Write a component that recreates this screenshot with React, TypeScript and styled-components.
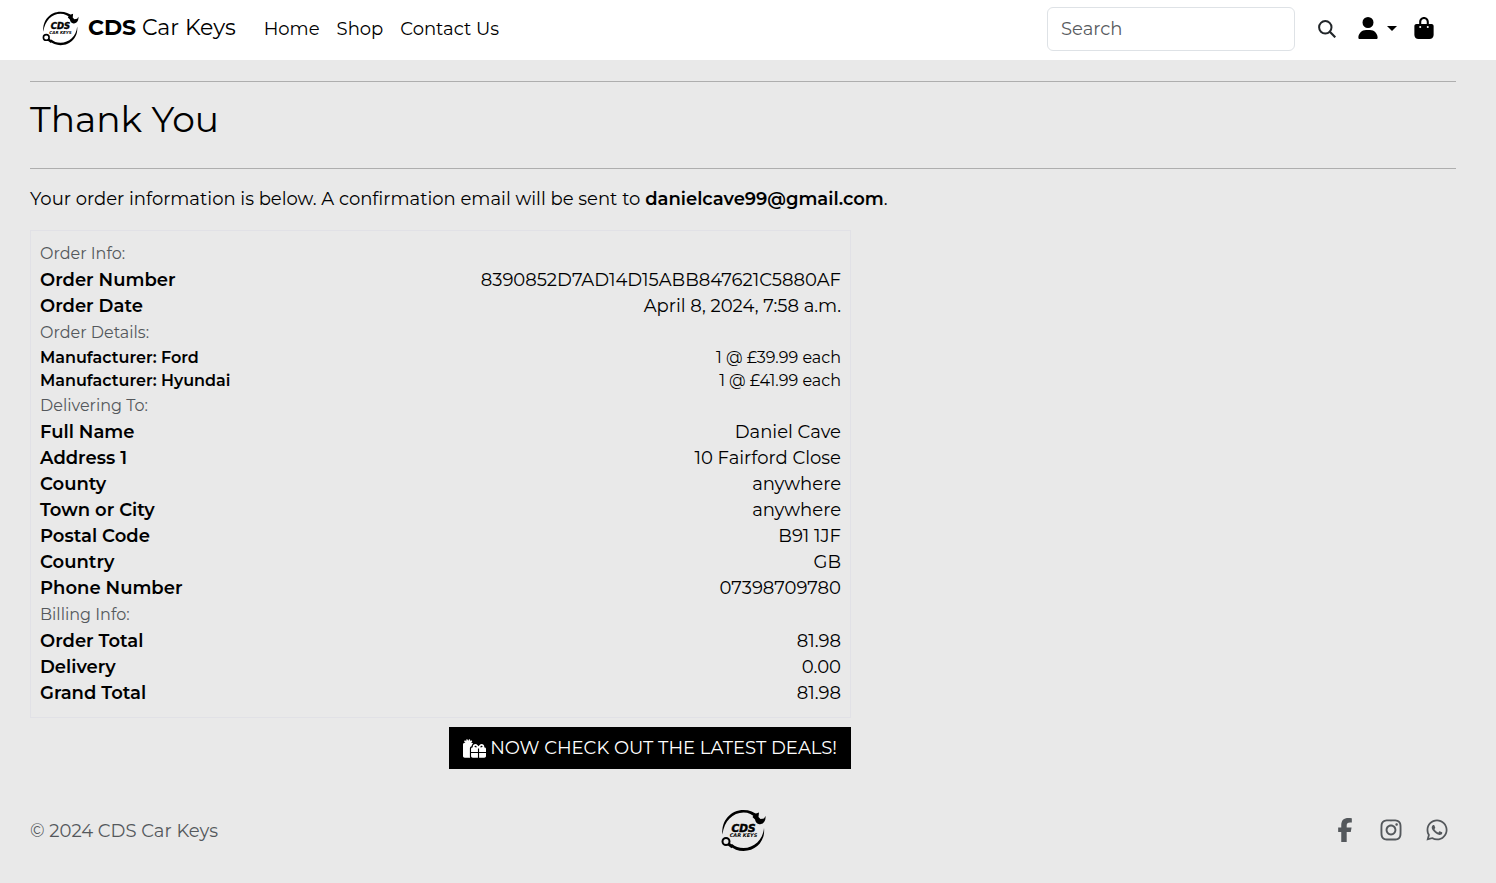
import React from "react";
import styled, { createGlobalStyle } from "styled-components";
import {
  FaBagShopping,
  FaFacebookF,
  FaGifts,
  FaInstagram,
  FaUser,
  FaWhatsapp,
} from "react-icons/fa6";

const GlobalStyle = createGlobalStyle`
  *, *::before, *::after { box-sizing: border-box; }
  body {
    margin: 0;
    min-height: 100vh;
    background: #e9e9e9;
    color: #000;
    font-family: Montserrat, Inter, sans-serif;
    font-size: 18px;
    line-height: 26px;
  }
  button, input { font: inherit; }
`;

const Header = styled.header`
  display: flex;
  align-items: center;
  height: 60px;
  padding: 0 61px 4px 42px;
  background: #fff;
`;

const Brand = styled.a`
  display: flex;
  align-items: center;
  gap: 9px;
  color: #000;
  font-size: 22px;
  text-decoration: none;
  white-space: nowrap;
`;

const BrandName = styled.span`
  strong { font-weight: 700; }
`;

const Nav = styled.nav`
  display: flex;
  gap: 17px;
  margin: 2px auto 0 28px;
`;

const NavLink = styled.a`
  color: #000;
  text-decoration: none;
`;

const SearchForm = styled.form`
  display: flex;
  align-items: center;
  gap: 23px;
  padding-top: 2px;
`;

const SearchInput = styled.input`
  width: 248px;
  height: 44px;
  padding: 6px 13px;
  border: 1px solid #dee2e6;
  border-radius: 6px;
  background: #fff;
  color: #212529;
  &::placeholder { color: #595c5f; opacity: 1; }
`;

const IconButton = styled.button`
  display: flex;
  align-items: center;
  gap: 8px;
  padding: 0;
  border: 0;
  background: none;
  color: #000;
  cursor: pointer;
`;

const Account = styled.div`
  display: flex;
  align-items: center;
  gap: 16px;
  margin-left: 21px;
`;

const BagLink = styled.a`
  display: flex;
  color: #000;
`;

const Caret = styled.span`
  border: 5px solid transparent;
  border-top-color: #000;
  border-bottom: 0;
`;

const Main = styled.main`
  padding: 21px 40px 0 30px;
`;

const Rule = styled.hr`
  margin: 0;
  border: 0;
  border-top: 1px solid #aeaeae;
`;

const Title = styled.h1`
  margin: 15px 0 27px;
  font-size: 36px;
  font-weight: 400;
  line-height: 44px;
`;

const Intro = styled.p`
  margin: 17px 0 18px;
  strong { font-weight: 600; }
`;

const Order = styled.div`
  width: 58%;
  max-width: 821px;
`;

const Card = styled.div`
  display: flex;
  flex-direction: column;
  gap: 1px;
  padding: 10px 9px 11px;
  border: 1px solid #e1e1e6;
`;

const GroupTitle = styled.h2`
  margin: 0;
  color: #54585c;
  font-size: 16px;
  font-weight: 400;
  line-height: 26px;
`;

const Details = styled.dl`
  margin: 0;
`;

const Row = styled.div<{ $small?: boolean }>`
  display: flex;
  justify-content: space-between;
  font-size: ${(p) => (p.$small ? 16 : 18)}px;
  line-height: ${(p) => (p.$small ? 23 : 26)}px;
  dt { font-weight: 600; }
  dd { margin: 0; }
`;

const Actions = styled.div`
  display: flex;
  justify-content: flex-end;
  margin-top: 9px;
`;

const DealsLink = styled.a`
  display: flex;
  align-items: center;
  gap: 4px;
  padding: 8px 14px;
  background: #000;
  color: #fff;
  text-decoration: none;
  white-space: nowrap;
`;

const Footer = styled.footer`
  display: grid;
  grid-template-columns: 1fr auto 1fr;
  align-items: center;
  padding: 40px 47px 31px 30px;
  color: #54585c;
`;

const FooterLogo = styled.a`
  display: flex;
  margin-left: 8px;
`;

const Social = styled.div`
  display: flex;
  justify-content: flex-end;
  align-items: center;
  gap: 22px;
  padding-bottom: 2px;
  a { display: flex; color: #54585c; }
`;

function Logo({ width, height }: { width: number; height: number }) {
  return (
    <svg width={width} height={height} viewBox="0 0 90 86" role="img" aria-label="CDS Car Keys">
      <path d="M3 51C0 23 20 2 45 2c12 0 22 4 29 11l-4 5C63 11 55 7 45 7 24 7 6 24 3 51Z" fill="#000" />
      <path d="M86 38c3 26-16 46-41 46-11 0-20-4-27-10l4-4c6 5 14 8 23 8 21 0 39-16 41-40Z" fill="#000" />
      <path d="M67 10l9-3-1 9 4 4 7-1 3-5c1 8-3 15-9 16-7 2-11-3-12-9l-5-5Z" fill="#000" />
      <circle cx="10" cy="65" r="7" fill="none" stroke="#000" strokeWidth="4" />
      <path d="m15 70 8 6" stroke="#000" strokeWidth="6" />
      <text x="45" y="45" textAnchor="middle" fontFamily="DejaVu Sans, sans-serif" fontSize="21" fontWeight="700" fontStyle="italic" stroke="#000" strokeWidth="1">CDS</text>
      <text x="45" y="56" textAnchor="middle" fontFamily="DejaVu Sans, sans-serif" fontSize="10" fontWeight="700" fontStyle="italic">CAR KEYS</text>
    </svg>
  );
}

function SearchIcon() {
  return (
    <svg width="18" height="18" viewBox="0 0 18 18" fill="none" stroke="#212529" strokeWidth="2" aria-hidden="true">
      <circle cx="7.3" cy="7.3" r="6.2" />
      <path d="m11.8 11.8 5.5 5.5" strokeWidth="2.2" />
    </svg>
  );
}

type Group = { title: string; small?: boolean; rows: [string, string][] };

const groups: Group[] = [
  {
    title: "Order Info:",
    rows: [
      ["Order Number", "8390852D7AD14D15ABB847621C5880AF"],
      ["Order Date", "April 8, 2024, 7:58 a.m."],
    ],
  },
  {
    title: "Order Details:",
    small: true,
    rows: [
      ["Manufacturer: Ford", "1 @ £39.99 each"],
      ["Manufacturer: Hyundai", "1 @ £41.99 each"],
    ],
  },
  {
    title: "Delivering To:",
    rows: [
      ["Full Name", "Daniel Cave"],
      ["Address 1", "10 Fairford Close"],
      ["County", "anywhere"],
      ["Town or City", "anywhere"],
      ["Postal Code", "B91 1JF"],
      ["Country", "GB"],
      ["Phone Number", "07398709780"],
    ],
  },
  {
    title: "Billing Info:",
    rows: [
      ["Order Total", "81.98"],
      ["Delivery", "0.00"],
      ["Grand Total", "81.98"],
    ],
  },
];

export default function App() {
  return (
    <>
      <GlobalStyle />
      <Header>
        <Brand href="#home">
          <Logo width={37} height={35} />
          <BrandName><strong>CDS</strong> Car Keys</BrandName>
        </Brand>
        <Nav>
          <NavLink href="#home">Home</NavLink>
          <NavLink href="#shop">Shop</NavLink>
          <NavLink href="#contact">Contact Us</NavLink>
        </Nav>
        <SearchForm role="search" onSubmit={(e) => e.preventDefault()}>
          <SearchInput type="search" placeholder="Search" aria-label="Search" />
          <IconButton type="submit" aria-label="Search"><SearchIcon /></IconButton>
        </SearchForm>
        <Account>
          <IconButton type="button" aria-label="My account">
            <FaUser size={22} />
            <Caret />
          </IconButton>
          <BagLink href="#bag" aria-label="Shopping bag"><FaBagShopping size={22} /></BagLink>
        </Account>
      </Header>
      <Main>
        <Rule />
        <Title>Thank You</Title>
        <Rule />
        <Intro>
          Your order information is below. A confirmation email will be sent to{" "}
          <strong>danielcave99@gmail.com</strong>.
        </Intro>
        <Order>
          <Card>
            {groups.map((group) => (
              <section key={group.title}>
                <GroupTitle>{group.title}</GroupTitle>
                <Details>
                  {group.rows.map(([label, value]) => (
                    <Row key={label} $small={group.small}>
                      <dt>{label}</dt>
                      <dd>{value}</dd>
                    </Row>
                  ))}
                </Details>
              </section>
            ))}
          </Card>
          <Actions>
            <DealsLink href="#deals">
              <FaGifts size={23} />
              NOW CHECK OUT THE LATEST DEALS!
            </DealsLink>
          </Actions>
        </Order>
      </Main>
      <Footer>
        <span>© 2024 CDS Car Keys</span>
        <FooterLogo href="#home"><Logo width={45} height={43} /></FooterLogo>
        <Social>
          <a href="#facebook" aria-label="Facebook"><FaFacebookF size={24} /></a>
          <a href="#instagram" aria-label="Instagram"><FaInstagram size={24} /></a>
          <a href="#whatsapp" aria-label="WhatsApp"><FaWhatsapp size={24} /></a>
        </Social>
      </Footer>
    </>
  );
}
